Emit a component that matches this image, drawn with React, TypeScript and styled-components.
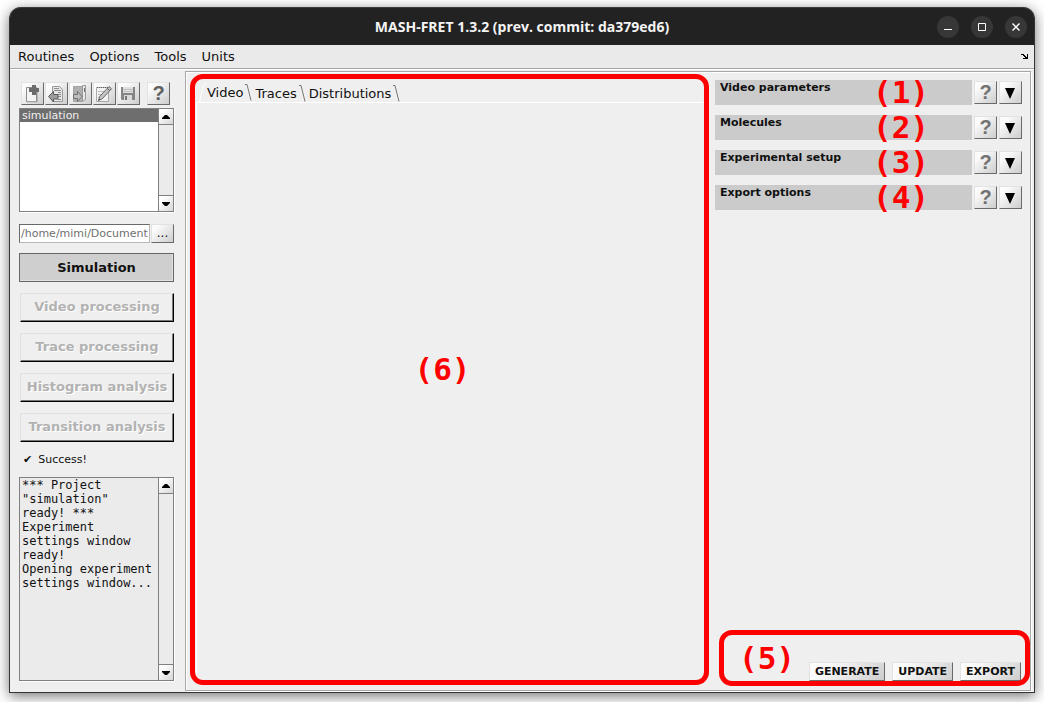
import React from "react";
import styled, { createGlobalStyle, css } from "styled-components";

const GlobalStyle = createGlobalStyle`
  * { box-sizing: border-box; }
  body {
    margin: 0;
    background: #fff;
    color: #111;
    font-family: "DejaVu Sans", Verdana, sans-serif;
    font-size: 11px;
  }
  button, input, select, textarea { font: inherit; color: inherit; margin: 0; }
`;

/* ---------- window frame ---------- */

const Desktop = styled.div`
  display: flex;
  min-height: 100vh;
  padding: 7px 9px 9px;
  overflow: hidden;
`;

const AppWindow = styled.div`
  flex: 1;
  min-width: 0;
  display: flex;
  flex-direction: column;
  background: #efefef;
  border: 1px solid #333;
  border-top: 0;
  border-radius: 12px 12px 0 0;
  box-shadow: 0 3px 14px rgba(0, 0, 0, 0.55);
`;

const TitleBar = styled.header`
  display: grid;
  grid-template-columns: 1fr auto 1fr;
  align-items: center;
  height: 38px;
  padding: 0 7px;
  background: #222;
  border-top: 1px solid #3a3a3a;
  border-radius: 11px 11px 0 0;
`;

const Title = styled.h1`
  grid-column: 2;
  margin: 0;
  color: #f4f4f4;
  font: 700 14px/20px "Open Sans", "Noto Sans", sans-serif;
`;

const WindowControls = styled.div`
  display: flex;
  justify-content: flex-end;
  gap: 12px;
`;

const WindowButton = styled.button`
  width: 22px;
  height: 22px;
  padding: 0;
  border: 0;
  border-radius: 50%;
  background: #373737;

  svg { display: block; }
`;

const MenuBar = styled.nav`
  display: flex;
  align-items: center;
  gap: 15px;
  height: 24px;
  padding: 0 5px 0 8px;
  background: #eaeaea;
  border-bottom: 1px solid #a8a8a8;
`;

const MenuItem = styled.button`
  padding: 0;
  border: 0;
  background: none;
  font-size: 13px;
  line-height: 16px;
`;

const DockButton = styled.button`
  display: flex;
  margin-left: auto;
  padding: 0;
  border: 0;
  background: none;
`;

const Workspace = styled.div`
  flex: 1;
  display: flex;
  padding: 1px 3px 1px 0;
  border-top: 1px solid #fff;
`;

/* ---------- shared controls ---------- */

const bevel = css`
  border: 1px solid;
  border-color: #e2e2e2 #6a6a6a #6a6a6a #e2e2e2;
  background: linear-gradient(135deg, #fbfbfb 20%, #cdcdcd);
`;

const IconButton = styled.button<{ $spaced?: boolean }>`
  ${bevel}
  flex: none;
  width: 23px;
  height: 23px;
  margin-left: ${(p) => (p.$spaced ? "6px" : "0")};
  padding: 0;

  svg { display: block; }
`;

const HelpMark = styled.span<{ $soft?: boolean }>`
  display: block;
  color: ${(p) => (p.$soft ? "#727272" : "#606060")};
  font: 700 20px/21px "Liberation Sans", Arial, sans-serif;
`;

const ScrollTrack = styled.div`
  flex: none;
  width: 15px;
  display: flex;
  flex-direction: column;
  justify-content: space-between;
  background: #ebebeb;
  border-left: 1px solid #808080;
`;

const ScrollButton = styled.button<{ $end?: boolean }>`
  height: 16px;
  padding: 0;
  border: 0 solid #808080;
  border-width: ${(p) => (p.$end ? "1px 0 0" : "0 0 1px")};
  background: linear-gradient(135deg, #fff 20%, #d6d6d6);

  svg { display: block; margin: 0 auto; }
`;

/* ---------- sidebar ---------- */

const Sidebar = styled.aside`
  flex: none;
  width: 175px;
  display: flex;
  flex-direction: column;
  padding: 11px 11px 10px 9px;
`;

const Toolbar = styled.div`
  display: flex;
  gap: 1px;
  padding-left: 2px;
`;

const Framed = styled.div<{ $grow?: boolean }>`
  display: flex;
  height: ${(p) => (p.$grow ? "auto" : "104px")};
  flex: ${(p) => (p.$grow ? "1 0 120px" : "none")};
  margin-top: ${(p) => (p.$grow ? "10px" : "3px")};
  border: 1px solid #808080;
  background: ${(p) => (p.$grow ? "#ebebeb" : "#fff")};
  box-shadow: 1px 1px #fff;
`;

const ProjectList = styled.select`
  flex: 1;
  min-width: 0;
  padding: 0;
  border: 0;
  border-radius: 0;
  outline: 0;
  background: #fff;
  overflow: hidden;
  font-size: 11px;

  option {
    min-height: 13px;
    padding: 0 2px;
    line-height: 13px;
  }
  option:checked {
    color: #eee;
    background: #6e6e6e linear-gradient(#6e6e6e, #6e6e6e);
  }
`;

const PathRow = styled.div`
  display: flex;
  gap: 1px;
  margin-top: 12px;
`;

const PathInput = styled.input`
  flex: 1;
  min-width: 0;
  height: 19px;
  padding: 0 1px;
  border: 1px solid;
  border-color: #6a6a6a #b8b8b8 #b8b8b8 #6a6a6a;
  border-radius: 0;
  background: #fff;
  color: #707070;
  font-size: 11px;
`;

const BrowseButton = styled.button`
  ${bevel}
  width: 23px;
  height: 19px;
  padding: 0;
  font-size: 12px;
  line-height: 15px;
`;

const ModuleList = styled.div`
  display: flex;
  flex-direction: column;
  gap: 11px;
  margin-top: 10px;
`;

const ModuleButton = styled.button`
  height: 29px;
  padding: 0;
  border: 1px solid;
  border-color: #666;
  background: #cfcfcf;
  box-shadow: inset -1px -1px #e2e2e2;
  font-size: 13px;
  font-weight: 700;

  &:disabled {
    margin-left: 1px;
    padding: 0 0 2px;
    border-color: #e0e0e0 #000 #000 #e0e0e0;
    background: #efefef;
    box-shadow: inset -1px -1px #777;
    color: #b2b2b2;
    text-shadow: 1px 1px #fff;
  }
`;

const Status = styled.p`
  display: flex;
  gap: 6px;
  margin: 10px 0 0 4px;
  font-size: 11px;
  line-height: 15px;
`;

const Log = styled.textarea`
  flex: 1;
  min-width: 0;
  padding: 0 2px;
  border: 0;
  outline: 0;
  resize: none;
  overflow: hidden;
  background: transparent;
  font: 12px/14px "DejaVu Sans Mono", monospace;
`;

/* ---------- main panel ---------- */

const MainPanel = styled.main`
  flex: 1;
  min-width: 0;
  display: flex;
  gap: 6px;
  padding: 2px 8px 5px 4px;
  border: 1px solid #a8a8a8;
  box-shadow: inset 1px 1px #fff, 1px 1px #fff;
`;

const ViewArea = styled.section`
  position: relative;
  flex: 1;
  min-width: 0;
  display: flex;
  flex-direction: column;
  padding: 9px 6px 6px;
`;

const TabStrip = styled.div`
  display: flex;
  align-items: flex-end;
  height: 19px;
  padding-left: 3px;
`;

const Tab = styled.button<{ $active?: boolean }>`
  display: flex;
  align-items: center;
  height: ${(p) => (p.$active ? "19px" : "17px")};
  padding: 0;
  border: 0;
  background: none;
  font-size: 13px;
  line-height: 17px;
`;

const TabBody = styled.div`
  flex: 1;
  border-top: 1px solid #fff;
  border-left: 1px solid #fff;
`;

const ControlsArea = styled.section`
  position: relative;
  flex: none;
  width: 307px;
  display: flex;
  flex-direction: column;
  justify-content: space-between;
  padding: 6px 0 4px;
`;

const Sections = styled.div`
  display: flex;
  flex-direction: column;
  gap: 10px;
`;

const SectionRow = styled.div`
  position: relative;
  display: flex;
  align-items: center;
  gap: 2px;
  height: 25px;
`;

const SectionTitle = styled.h2`
  flex: 1;
  align-self: stretch;
  margin: 0;
  padding-left: 5px;
  background: #cbcbcb;
  font-size: 11px;
  line-height: 15px;
`;

const Actions = styled.div`
  display: flex;
  justify-content: flex-end;
  gap: 7px;
  padding-right: 1px;
`;

const ActionButton = styled.button`
  ${bevel}
  height: 19px;
  padding: 1px 5px 0;
  font-size: 11px;
  line-height: 16px;
  font-weight: 700;
`;

/* ---------- red call-outs drawn over the panels ---------- */

const Outline = styled.div<{ $inset: string }>`
  position: absolute;
  inset: ${(p) => p.$inset};
  border: 5px solid #f00;
  border-radius: 13px;
  pointer-events: none;
`;

const Callout = styled.span<{ $left: string; $top: string }>`
  position: absolute;
  left: ${(p) => p.$left};
  top: ${(p) => p.$top};
  color: #f00;
  font: 700 31px/36px "DejaVu Sans Mono", monospace;
  pointer-events: none;
`;

/* ---------- drawings ---------- */

const Triangle = ({ down }: { down?: boolean }) => (
  <svg width="14" height="14" viewBox="0 0 14 14" aria-hidden="true">
    <path d={down ? "M3 5h8v1l-3 3h-2l-3-3z" : "M3 9h8v-1l-3-3h-2l-3 3z"} fill="#000" />
  </svg>
);

const NewIcon = () => (
  <svg width="21" height="21" viewBox="0 0 21 21" fill="none">
    <path d="M4.500 4.500h10v14h-10z" fill="#f4f4f4" stroke="#8c8c8c" />
    <path d="M15.500 6v13h-10" stroke="#b5b5b5" />
    <path d="M10 2h4v3h3v4h-3v3h-4V9H7V5h3z" fill="#6c6c6c" />
  </svg>
);

const OpenIcon = () => (
  <svg width="21" height="21" viewBox="0 0 21 21" fill="none">
    <path d="M6.500 3.500h7l3 3v12h-10z" fill="#e6e6e6" stroke="#9a9a9a" />
    <path d="M8 5.500h5M8 7.500h7M12 9.500h3M12 11.500h3M12 13.500h3M12 16.500h3" stroke="#8c8c8c" />
    <path d="M2.500 13.500l5-5v3h4.500v4.500h-4.500v3z" fill="#9c9c9c" stroke="#5c5c5c" />
  </svg>
);

const CloseIcon = () => (
  <svg width="21" height="21" viewBox="0 0 21 21" fill="none">
    <path d="M3.500 3.500h9v15h-9z" fill="#b0b0b0" stroke="#a4a4a4" />
    <path d="M12.500 2.500h3v14l-3 2z" fill="#e8e8e8" stroke="#999" />
    <path d="M14.500 5v4" stroke="#777" />
    <path d="M3.500 11.500h4v-3l4.500 5-4.500 5v-3h-4z" fill="#bdbdbd" stroke="#737373" />
  </svg>
);

const EditIcon = () => (
  <svg width="21" height="21" viewBox="0 0 21 21" fill="none">
    <path d="M2.500 4.500h12v14h-12z" fill="#f1f1f1" stroke="#aaa" />
    <path d="M3 4.500h12" stroke="#666" strokeDasharray="1 1" />
    <path d="M4 8.500h8M4 11.500h7M4 14.500h4" stroke="#bbb" />
    <path d="M4.500 17.500l1.200-4L15 3.500l2.500 2.300-9.300 10z" fill="#c6c6c6" stroke="#666" />
    <path d="M13.500 5.500l2.300 2.200M4.500 17.500l1.500-1.500" stroke="#555" />
  </svg>
);

const SaveIcon = () => (
  <svg width="21" height="21" viewBox="0 0 21 21" fill="none">
    <path d="M3 4h14v13H4l-1-1z" fill="#858585" />
    <path d="M5 4h10v6H5z" fill="#e0e0e0" />
    <path d="M5 6.500h10M5 8.500h10" stroke="#c0c0c0" />
    <path d="M6 12h8v5H6z" fill="#d9d9d9" />
    <path d="M7 13h2v4H7z" fill="#777" />
  </svg>
);

const ExpandIcon = () => (
  <svg width="21" height="21" viewBox="0 0 21 21">
    <path d="M5 6h10l-5 11z" fill="#000" />
  </svg>
);

const TabLead = () => (
  <svg width="8" height="19" viewBox="0 0 8 19" fill="none" aria-hidden="true">
    <path d="M0.500 19l4-17 3-1.500" stroke="#fff" />
  </svg>
);

const TabEdge = () => (
  <svg width="12" height="17" viewBox="0 0 12 17" fill="none" aria-hidden="true">
    <path d="M2 0.500h2l4 16" stroke="#777" />
  </svg>
);

const ScrollBar = ({ label }: { label: string }) => (
  <ScrollTrack>
    <ScrollButton aria-label={`Scroll ${label} up`}><Triangle /></ScrollButton>
    <ScrollButton $end aria-label={`Scroll ${label} down`}><Triangle down /></ScrollButton>
  </ScrollTrack>
);

/* ---------- data ---------- */

const tools = [
  { label: "New project", icon: <NewIcon /> },
  { label: "Open project", icon: <OpenIcon /> },
  { label: "Close project", icon: <CloseIcon /> },
  { label: "Edit project", icon: <EditIcon /> },
  { label: "Save project", icon: <SaveIcon /> },
];

const modules = [
  "Simulation",
  "Video processing",
  "Trace processing",
  "Histogram analysis",
  "Transition analysis",
];

const sections = ["Video parameters", "Molecules", "Experimental setup", "Export options"];

const logText = `*** Project
"simulation"
ready! ***
Experiment
settings window
ready!
Opening experiment
settings window...`;

export default function App() {
  return (
    <>
      <GlobalStyle />
      <Desktop>
        <AppWindow>
          <TitleBar>
            <Title>MASH-FRET 1.3.2 (prev. commit: da379ed6)</Title>
            <WindowControls>
              <WindowButton aria-label="Minimize">
                <svg width="22" height="22" viewBox="0 0 22 22" stroke="#fff" fill="none">
                  <path d="M7 13.500h8" />
                </svg>
              </WindowButton>
              <WindowButton aria-label="Maximize">
                <svg width="22" height="22" viewBox="0 0 22 22" stroke="#fff" fill="none">
                  <path d="M7.500 7.500h7v7h-7z" />
                </svg>
              </WindowButton>
              <WindowButton aria-label="Close">
                <svg width="22" height="22" viewBox="0 0 22 22" stroke="#fff" fill="none">
                  <path d="M7.500 7.500l7 7M14.500 7.500l-7 7" strokeWidth="1.400" />
                </svg>
              </WindowButton>
            </WindowControls>
          </TitleBar>

          <MenuBar>
            {["Routines", "Options", "Tools", "Units"].map((m) => (
              <MenuItem key={m}>{m}</MenuItem>
            ))}
            <DockButton aria-label="Dock window">
              <svg width="8" height="7" viewBox="0 0 8 7" aria-hidden="true">
                <path d="M0 1h3v1h1v1h1v1h1V1h1v5H2V5h2V4H3V3H2V2H0z" fill="#000" />
              </svg>
            </DockButton>
          </MenuBar>

          <Workspace>
            <Sidebar>
              <Toolbar>
                {tools.map((t) => (
                  <IconButton key={t.label} aria-label={t.label}>{t.icon}</IconButton>
                ))}
                <IconButton $spaced aria-label="Help"><HelpMark>?</HelpMark></IconButton>
              </Toolbar>

              <Framed>
                <ProjectList size={7} defaultValue="simulation" aria-label="Projects">
                  <option value="simulation">simulation</option>
                </ProjectList>
                <ScrollBar label="projects" />
              </Framed>

              <PathRow>
                <PathInput aria-label="Root folder" defaultValue="/home/mimi/Documents" />
                <BrowseButton aria-label="Browse">...</BrowseButton>
              </PathRow>

              <ModuleList>
                {modules.map((m, i) => (
                  <ModuleButton key={m} disabled={i > 0}>{m}</ModuleButton>
                ))}
              </ModuleList>

              <Status><span>✔</span><span>Success!</span></Status>

              <Framed $grow>
                <Log readOnly aria-label="Log" value={logText} />
                <ScrollBar label="log" />
              </Framed>
            </Sidebar>

            <MainPanel>
              <ViewArea>
                <TabStrip role="tablist">
                  <Tab $active role="tab" aria-selected="true"><TabLead />Video<TabEdge /></Tab>
                  <Tab role="tab" aria-selected="false">Traces<TabEdge /></Tab>
                  <Tab role="tab" aria-selected="false">Distributions<TabEdge /></Tab>
                </TabStrip>
                <TabBody role="tabpanel" />
                <Outline $inset="0" />
                <Callout $left="calc(50% - 35px)" $top="calc(50% - 29px)">(6)</Callout>
              </ViewArea>

              <ControlsArea>
                <Sections>
                  {sections.map((s, i) => (
                    <SectionRow key={s}>
                      <SectionTitle>{s}</SectionTitle>
                      <IconButton aria-label={`Help on ${s}`}><HelpMark $soft>?</HelpMark></IconButton>
                      <IconButton aria-label={`Expand ${s}`}><ExpandIcon /></IconButton>
                      <Callout $left="158px" $top="-6px">({i + 1})</Callout>
                    </SectionRow>
                  ))}
                </Sections>
                <Actions>
                  <ActionButton>GENERATE</ActionButton>
                  <ActionButton>UPDATE</ActionButton>
                  <ActionButton>EXPORT</ActionButton>
                </Actions>
                <Outline $inset="calc(100% - 55px) -8px -1px 4px" />
                <Callout $left="24px" $top="calc(100% - 45px)">(5)</Callout>
              </ControlsArea>
            </MainPanel>
          </Workspace>
        </AppWindow>
      </Desktop>
    </>
  );
}
